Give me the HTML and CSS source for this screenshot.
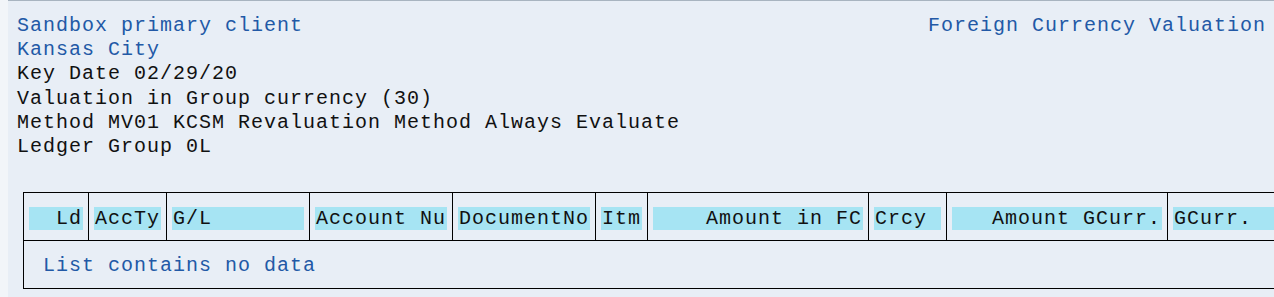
FILE: index.html
```html
<!DOCTYPE html>
<html lang="en">
<head>
    <meta charset="UTF-8">
    <title>Foreign Currency Valuation</title>
    <link rel="stylesheet" href="styles.css">
</head>
<body>
    <div class="panel">
        <div class="top">
            <div class="line blue">Sandbox primary client</div>
            <div class="line blue">Foreign Currency Valuation</div>
        </div>
        <div class="line blue">Kansas City</div>
        <div class="line">Key Date 02/29/20</div>
        <div class="line">Valuation in Group currency (30)</div>
        <div class="line">Method MV01 KCSM Revaluation Method Always Evaluate</div>
        <div class="line">Ledger Group 0L</div>

        <div class="grid">
            <div class="grid-head">
                <div class="col"><span class="w4 num">Ld</span></div>
                <div class="col"><span class="w5">AccTy</span></div>
                <div class="col"><span class="w10">G/L</span></div>
                <div class="col"><span class="w10">Account Nu</span></div>
                <div class="col"><span class="w10">DocumentNo</span></div>
                <div class="col"><span class="w3">Itm</span></div>
                <div class="col"><span class="w16 num">Amount in FC</span></div>
                <div class="col"><span class="w5">Crcy</span></div>
                <div class="col"><span class="w16 num">Amount GCurr.</span></div>
                <div class="col"><span class="w10">GCurr.</span></div>
            </div>
            <div class="empty blue">List contains no data</div>
        </div>
    </div>
</body>
</html>
```

FILE: styles.css
```css
html, body{
    margin: 0;
    height: 100%;
    overflow: hidden;
}
body{
    background-color: #f2f5f9;
    font-family: "Liberation Mono", "Courier New", monospace;
    font-size: 20px;
    letter-spacing: 1px;
    color: #111;
}

.panel{
    margin-left: 8px;
    height: 100%;
    box-sizing: border-box;
    padding: 13px 8px 0 9px;
    background-color: #e8eef6;
    border-top: 1px solid #a8b4c0;
}

.top{
    display: flex;
    justify-content: space-between;
}

.line{
    height: 24.2px;
    line-height: 24.2px;
    white-space: pre;
}

.blue{
    color: #2259a6;
}

.grid{
    margin: 33px 0 0 6px;
    width: max-content;
    border: 1px solid #000;
    border-right: none;
}

.grid-head{
    display: flex;
    border-bottom: 1px solid #000;
}

.col{
    padding: 14px 5px 10px;
    border-left: 1px solid #000;
}
.col:first-child{
    border-left: none;
}
.col span{
    display: block;
    height: 23px;
    line-height: 23px;
    padding: 0 1px;
    white-space: pre;
    background-color: #a6e4f3;
}
.col .num{
    text-align: right;
}

.w3{ width: 39px; }
.w4{ width: 52px; }
.w5{ width: 65px; }
.w10{ width: 130px; }
.w16{ width: 208px; }

.empty{
    padding: 13px 0 11px 19px;
    line-height: 23px;
}
```
